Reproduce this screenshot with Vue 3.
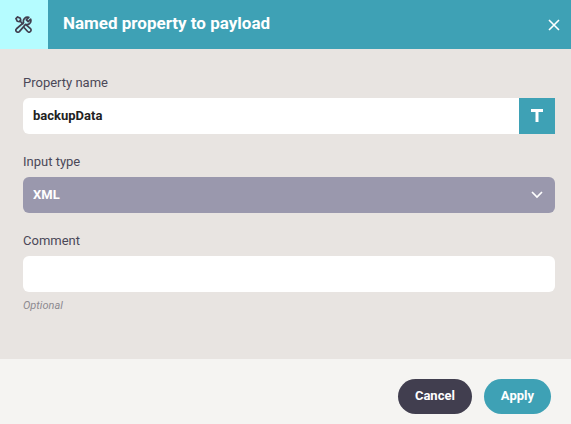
<script setup>
import { ref } from 'vue'

const propertyName = ref('backupData')
const inputType = ref('XML')
const comment = ref('')
</script>

<template>
  <form class="dialog" @submit.prevent>
    <header class="header">
      <span class="badge">
        <svg class="tools" viewBox="0 0 18 18" aria-hidden="true">
          <path d="M1 2.800 2.800 1l2.800 1.500.5 2L4.500 6.100l-2-.5z" />
          <path d="m5.300 5.300 3 3" />
          <path d="M14.600 1.500a4.300 4.300 0 0 0-5.500 5.400L1.600 13.500a2.100 2.100 0 0 0 3 3l6.600-7.600a4.300 4.300 0 0 0 5.400-5.500L14 6l-2-2z" />
          <path d="m9.800 12.400 3.600 4a2 2 0 0 0 3-3l-4-3.400" />
        </svg>
      </span>
      <h1 class="title">Named property to payload</h1>
      <button class="close" type="button" aria-label="Close">
        <svg class="cross" viewBox="0 0 12 12" aria-hidden="true">
          <path d="m1 1 10 10M11 1 1 11" />
        </svg>
      </button>
    </header>

    <main class="body">
      <div class="field">
        <label for="property-name">Property name</label>
        <div class="group">
          <input id="property-name" v-model="propertyName" class="control" type="text" />
          <button class="type" type="button" aria-label="Text value">
            <svg class="letter" viewBox="0 0 12 13" aria-hidden="true">
              <path d="M0 1.500h12M6 1.500V13" />
            </svg>
          </button>
        </div>
      </div>
      <div class="field">
        <label for="input-type">Input type</label>
        <div class="picker">
          <select id="input-type" v-model="inputType" class="control select">
            <option>XML</option>
            <option>JSON</option>
          </select>
          <svg class="chevron" viewBox="0 0 12 8" aria-hidden="true">
            <path d="m1 1 5 5 5-5" />
          </svg>
        </div>
      </div>
      <div class="field">
        <label for="comment">Comment</label>
        <input id="comment" v-model="comment" class="control" type="text" aria-describedby="comment-hint" />
        <small id="comment-hint" class="hint">Optional</small>
      </div>
    </main>

    <footer class="footer">
      <button class="action cancel" type="button">Cancel</button>
      <button class="action apply" type="submit">Apply</button>
    </footer>
  </form>
</template>

<style>
body {
  background: #f5f4f2;
}
</style>

<style scoped>
.dialog,
.dialog * {
  box-sizing: border-box;
}
.dialog {
  display: flex;
  flex-direction: column;
  min-height: 100vh;
  color: #4b4858;
  font-family: Roboto, "Liberation Sans", sans-serif;
  font-size: 13px;
  line-height: 16px;
}
button,
input,
select {
  margin: 0;
  padding: 0;
  border: 0;
  font: inherit;
}
svg {
  display: block;
  fill: none;
  stroke: currentColor;
}
.header {
  display: flex;
  height: 49px;
  background: #3ea1b5;
  color: #fff;
}
.badge {
  display: grid;
  place-items: center;
  width: 48px;
  padding-right: 2px;
  background: #b5fcff;
  color: #413e4f;
}
.tools {
  width: 17px;
  height: 17px;
  stroke-width: 1.8;
  stroke-linejoin: round;
  stroke-linecap: round;
}
.title {
  flex: 1;
  margin: 0;
  padding: 11px 15px;
  font-size: 17px;
  font-weight: 700;
  line-height: 24px;
}
.close {
  display: grid;
  place-items: center;
  width: 34px;
  background: transparent;
  color: inherit;
}
.cross {
  width: 12px;
  height: 12px;
  stroke-width: 1.6;
}
.body {
  display: flex;
  flex: 1;
  flex-direction: column;
  gap: 20px;
  padding: 26px 16px 24px 23px;
  background: #e8e4e1;
}
.field {
  display: flex;
  flex-direction: column;
}
label {
  margin-bottom: 7px;
}
.group {
  display: flex;
  border-radius: 6px 0 0 6px;
  overflow: hidden;
}
.control {
  width: 100%;
  min-width: 0;
  height: 36px;
  padding: 0 10px 2px;
  border-radius: 6px;
  background: #fff;
  color: #222;
  font-weight: 700;
}
.group .control {
  flex: 1;
  border-radius: 0;
}
.type {
  display: grid;
  place-items: center;
  width: 36px;
  padding-bottom: 2px;
  background: #3ea1b5;
  color: #fff;
}
.letter {
  width: 12px;
  height: 13px;
  stroke-width: 3;
}
.picker {
  display: grid;
  align-items: center;
}
.picker > * {
  grid-area: 1 / 1;
}
.select {
  appearance: none;
  padding-bottom: 0;
  background: #9a98ad;
  color: #fff;
}
.chevron {
  justify-self: end;
  width: 12px;
  height: 8px;
  margin-right: 12px;
  color: #fff;
  stroke-width: 1.7;
  pointer-events: none;
}
.hint {
  margin-top: 6px;
  color: #8d8a90;
  font-size: 11px;
  font-style: italic;
}
.footer {
  display: flex;
  justify-content: flex-end;
  gap: 12px;
  padding: 20px 20px 10px;
  background: #f5f4f2;
}
.action {
  height: 35px;
  padding: 0 17px 2px;
  border-radius: 18px;
  color: #fff;
  font-weight: 700;
}
.cancel {
  background: #413e4f;
}
.apply {
  background: #3ea1b5;
}
</style>
